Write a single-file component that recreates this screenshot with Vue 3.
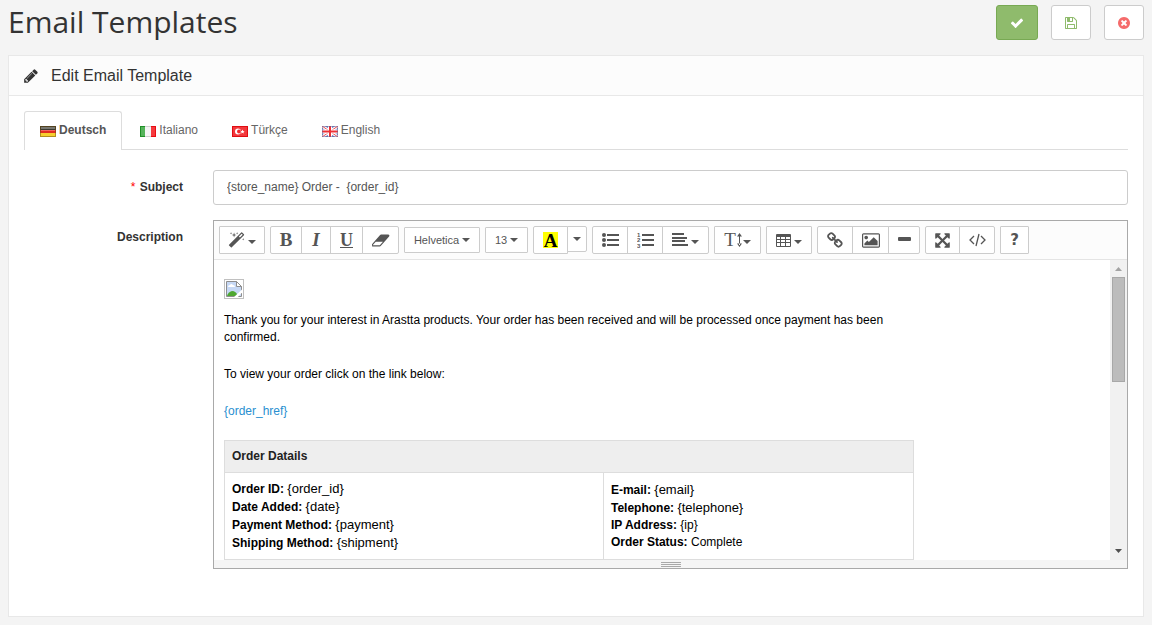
<script setup>
import { ref } from 'vue'

const subject = ref('{store_name} Order -  {order_id}')
const active = ref('de')
const languages = [
  { code: 'de', name: 'Deutsch' },
  { code: 'it', name: 'Italiano' },
  { code: 'tr', name: 'Türkçe' },
  { code: 'en', name: 'English' },
]
</script>

<template>
  <div class="page">
    <header class="page-header">
      <h1>Email Templates</h1>
      <div class="actions">
        <button type="button" class="action primary" aria-label="Save and close">
          <svg width="14" height="14" viewBox="0 0 1792 1792"><path d="M1671 566q0 40-28 68l-724 724-136 136q-28 28-68 28t-68-28l-136-136-362-362q-28-28-28-68t28-68l136-136q28-28 68-28t68 28l294 295 656-657q28-28 68-28t68 28l136 136q28 28 28 68z" /></svg>
        </button>
        <button type="button" class="action save" aria-label="Save">
          <svg width="14" height="14" viewBox="0 0 1792 1792"><path d="M512 1536h768v-384h-768v384zm896 0h128v-896q0-14-10-38.500t-20-34.500l-281-281q-10-10-34-20t-39-10v416q0 40-28 68t-68 28h-576q-40 0-68-28t-28-68v-416h-128v1280h128v-416q0-40 28-68t68-28h832q40 0 68 28t28 68v416zm-384-928v-320q0-13-9.500-22.500t-22.500-9.500h-192q-13 0-22.500 9.500t-9.500 22.500v320q0 13 9.500 22.500t22.500 9.500h192q13 0 22.500-9.500t9.500-22.500zm640 32v928q0 40-28 68t-68 28h-1344q-40 0-68-28t-28-68v-1344q0-40 28-68t68-28h928q40 0 88 20t76 48l280 280q28 28 48 76t20 88z" /></svg>
        </button>
        <button type="button" class="action cancel" aria-label="Cancel">
          <svg width="14" height="14" viewBox="0 0 1792 1792"><path d="M1277 1122q0-26-19-45l-181-181 181-181q19-19 19-45 0-27-19-46l-90-90q-19-19-46-19-26 0-45 19l-181 181-181-181q-19-19-45-19-27 0-46 19l-90 90q-19 19-19 46 0 26 19 45l181 181-181 181q-19 19-19 45 0 27 19 46l90 90q19 19 46 19 26 0 45-19l181-181 181 181q19 19 45 19 27 0 46-19l90-90q19-19 19-46zm387-226q0 209-103 385.500t-279.500 279.500-385.500 103-385.500-103-279.500-279.500-103-385.500 103-385.500 279.500-279.500 385.500-103 385.500 103 279.500 279.500 103 385.500z" /></svg>
        </button>
      </div>
    </header>

    <main class="panel">
      <div class="panel-heading">
        <svg width="16" height="16" viewBox="0 0 1792 1792"><path d="M491 1536l91-91-235-235-91 91v107h128v128h107zm523-928q0-22-22-22-10 0-17 7l-542 542q-7 7-7 17 0 22 22 22 10 0 17-7l542-542q7-7 7-17zm-54-192l416 416-832 832h-416v-416zm683 96q0 53-37 90l-166 166-416-416 166-165q36-38 90-38 53 0 91 38l235 234q37 39 37 91z" /></svg>
        <h2>Edit Email Template</h2>
      </div>

      <div class="panel-body">
        <nav class="tabs">
          <a
            v-for="lang in languages"
            :key="lang.code"
            href="#"
            class="tab"
            :class="{ active: active === lang.code }"
            @click.prevent="active = lang.code"
          >
            <svg class="flag" width="16" height="11" viewBox="0 0 16 11">
              <g v-if="lang.code === 'de'">
                <rect width="16" height="4" fill="#3a3a33" />
                <rect y="4" width="16" height="3" fill="#e02b20" />
                <rect y="7" width="16" height="4" fill="#f6cf2e" />
                <rect x="1" y="1" width="14" height="2" fill="#77776f" />
                <rect x="1" y="4" width="14" height="1" fill="#f5625a" />
                <rect x="0.500" y="0.500" width="15" height="10" fill="none" stroke="#6b4c10" stroke-opacity=".5" />
              </g>
              <g v-else-if="lang.code === 'it'">
                <rect width="16" height="11" fill="#f4f4f4" />
                <rect width="5" height="11" fill="#1f8f26" />
                <rect x="11" width="5" height="11" fill="#e80c12" />
                <rect x="1" y="1" width="4" height="9" fill="#55b35a" />
                <rect x="11" y="1" width="4" height="9" fill="#f53a3e" />
                <path d="M5 .5h6M5 10.500h6" stroke="#cfcfcf" />
              </g>
              <g v-else-if="lang.code === 'tr'">
                <rect width="16" height="11" fill="#e00d12" />
                <rect x="1" y="1" width="14" height="9" fill="#f3383c" />
                <circle cx="6" cy="5.500" r="3" fill="#fff" />
                <circle cx="7" cy="5.500" r="2" fill="#f0282c" />
                <path d="M10.500 3.500l.6 1.400 1.500.1-1.100 1 .3 1.500-1.300-.8-1.300.8.3-1.500-1.100-1 1.500-.1z" fill="#fff" />
              </g>
              <g v-else>
                <rect width="16" height="11" fill="#7d8ac4" />
                <path d="M0 0l16 11M16 0L0 11" stroke="#fff" stroke-width="3" />
                <path d="M0 0l16 11M16 0L0 11" stroke="#ee4b50" stroke-width="1" />
                <path d="M8 0v11M0 5.500h16" stroke="#fff" stroke-width="4" />
                <path d="M8 0v11M0 5.500h16" stroke="#ee3136" stroke-width="2" />
                <rect x="0.500" y="0.500" width="15" height="10" fill="none" stroke="#5b5f96" stroke-opacity=".5" />
              </g>
            </svg>
            <span>{{ lang.name }}</span>
          </a>
        </nav>

        <form class="form" @submit.prevent>
          <div class="row">
            <label for="subject"><span class="required">*</span> Subject</label>
            <div class="field">
              <input id="subject" v-model="subject" type="text" class="text-input" />
            </div>
          </div>

          <div class="row">
            <label id="description-label">Description</label>
            <div class="field">
              <div class="editor">
                <div class="toolbar">
                  <div class="group">
                    <button type="button" class="tool w46" aria-label="Style">
                      <svg width="17" height="17" viewBox="0 0 1792 1792"><path d="M1254 581l293-293-107-107-293 293zm447-293q0 27-18 45l-1286 1286q-18 18-45 18t-45-18l-198-198q-18-18-18-45t18-45l1286-1286q18-18 45-18t45 18l198 198q18 18 18 45zm-1351-190l98 30-98 30-30 98-30-98-98-30 98-30 30-98zm350 162l196 60-196 60-60 196-60-196-196-60 196-60 60-196zm930 478l98 30-98 30-30 98-30-98-98-30 98-30 30-98zm-640-640l98 30-98 30-30 98-30-98-98-30 98-30 30-98z" /></svg>
                      <i class="caret"></i>
                    </button>
                  </div>
                  <div class="group">
                    <button type="button" class="tool w32 serif bold">B</button>
                    <button type="button" class="tool w30 serif bold italic">I</button>
                    <button type="button" class="tool w33 serif bold underline">U</button>
                    <button type="button" class="tool w37" aria-label="Remove formatting">
                      <svg width="18" height="17" viewBox="0 0 1920 1792"><path d="M832 1408l336-384h-768l-336 384h768zm1013-1077q15 34 9.500 71.500t-30.500 65.500l-896 1024q-38 44-96 44h-768q-38 0-69.500-20.500t-47.500-54.500q-15-34-9.500-71.500t30.500-65.500l896-1024q38-44 96-44h768q38 0 69.500 20.500t47.500 54.500z" /></svg>
                    </button>
                  </div>
                  <div class="group">
                    <button type="button" class="tool short w76">Helvetica <i class="caret"></i></button>
                  </div>
                  <div class="group">
                    <button type="button" class="tool short w43">13 <i class="caret"></i></button>
                  </div>
                  <div class="group">
                    <button type="button" class="tool w35 serif bold"><span class="mark">A</span></button>
                    <button type="button" class="tool short w20" aria-label="More colors"><i class="caret"></i></button>
                  </div>
                  <div class="group">
                    <button type="button" class="tool w36" aria-label="Unordered list">
                      <svg width="17" height="14" viewBox="0 0 17 14">
                        <circle cx="2" cy="2" r="2" /><circle cx="2" cy="7" r="2" /><circle cx="2" cy="12" r="2" />
                        <path d="M5 1h12v2H5zM5 6h12v2H5zM5 11h12v2H5z" />
                      </svg>
                    </button>
                    <button type="button" class="tool w36" aria-label="Ordered list">
                      <svg width="17" height="16" viewBox="0 0 17 16">
                        <text class="digit" x="0" y="5">1</text>
                        <text class="digit" x="0" y="10">2</text>
                        <text class="digit" x="0" y="16">3</text>
                        <path d="M5 2h12v2H5zM5 7h12v2H5zM5 12h12v2H5z" />
                      </svg>
                    </button>
                    <button type="button" class="tool w47" aria-label="Paragraph">
                      <svg width="16" height="14" viewBox="0 0 16 14"><path d="M0 0h12v2H0zM0 4h15v2H0zM0 7h13v2H0zM0 11h16v2H0z" /></svg>
                      <i class="caret"></i>
                    </button>
                  </div>
                  <div class="group">
                    <button type="button" class="tool w47 serif tight" aria-label="Line height">
                      <span>T</span>
                      <svg width="5" height="14" viewBox="0 0 5 14"><path d="M2 2h1v10H2zM0 3.500L2.500 0 5 3.500zM0 10.500L2.500 14 5 10.500z" /></svg>
                      <i class="caret"></i>
                    </button>
                  </div>
                  <div class="group">
                    <button type="button" class="tool w46" aria-label="Table">
                      <svg width="15" height="13" viewBox="0 0 15 13"><path fill-rule="evenodd" d="M1 0h13q1 0 1 1v11q0 1-1 1H1q-1 0-1-1V1q0-1 1-1zM1 3v2h3V3zM5 3v2h4V3zM10 3v2h4V3zM1 6v2h3V6zM5 6v2h4V6zM10 6v2h4V6zM1 9v3h3V9zM5 9v3h4V9zM10 9v3h4V9z" /></svg>
                      <i class="caret"></i>
                    </button>
                  </div>
                  <div class="group">
                    <button type="button" class="tool w36" aria-label="Link">
                      <svg width="17" height="17" viewBox="0 0 1792 1792"><path d="M1456 1216q0-40-28-68l-208-208q-28-28-68-28-42 0-72 32 3 3 19 18.500t21.500 21.500 15 19 13 25.500 3.500 27.500q0 40-28 68t-68 28q-15 0-27.500-3.500t-25.500-13-19-15-21.500-21.500-18.500-19q-33 31-33 73 0 40 28 68l206 207q27 27 68 27 40 0 68-26l147-146q28-28 28-67zm-703-705q0-40-28-68l-206-207q-28-28-68-28-39 0-68 27l-147 146q-28 28-28 67 0 40 28 68l208 208q27 27 68 27 42 0 72-31-3-3-19-18.500t-21.500-21.500-15-19-13-25.500-3.500-27.500q0-40 28-68t68-28q15 0 27.500 3.500t25.500 13 19 15 21.500 21.500 18.500 19q33-31 33-73zm895 705q0 120-85 203l-147 146q-83 83-203 83-121 0-204-85l-206-207q-83-83-83-203 0-123 88-209l-88-88q-86 88-208 88-120 0-204-84l-208-208q-84-84-84-204t85-203l147-146q83-83 203-83 121 0 204 85l206 207q83 83 83 203 0 123-88 209l88 88q86-88 208-88 120 0 204 84l208 208q84 84 84 204z" /></svg>
                    </button>
                    <button type="button" class="tool w37" aria-label="Picture">
                      <svg width="18" height="17" viewBox="-64 0 1920 1792"><path d="M576 576q0 80-56 136t-136 56-136-56-56-136 56-136 136-56 136 56 56 136zm1024 384v448h-1408v-192l320-320 160 160 512-512zm96-704h-1600q-13 0-22.500 9.500t-9.500 22.500v1216q0 13 9.500 22.500t22.500 9.500h1600q13 0 22.500-9.500t9.500-22.500v-1216q0-13-9.500-22.500t-22.500-9.500zm160 32v1216q0 66-47 113t-113 47h-1600q-66 0-113-47t-47-113v-1216q0-66 47-113t113-47h1600q66 0 113 47t47 113z" /></svg>
                    </button>
                    <button type="button" class="tool w32" aria-label="Horizontal rule">
                      <svg width="13" height="14" viewBox="0 0 13 14"><rect y="4" width="13" height="4" rx="1" /></svg>
                    </button>
                  </div>
                  <div class="group">
                    <button type="button" class="tool w35" aria-label="Full screen">
                      <svg width="17" height="17" viewBox="0 0 1792 1792"><path d="M1411 541l-355 355 355 355 144-144q29-31 70-14 39 17 39 59v448q0 26-19 45t-45 19h-448q-42 0-59-40-17-39 14-69l144-144-355-355-355 355 144 144q31 30 14 69-17 40-59 40h-448q-26 0-45-19t-19-45v-448q0-42 40-59 39-17 69 14l144 144 355-355-355-355-144 144q-19 19-45 19-12 0-24-5-40-17-40-59v-448q0-26 19-45t45-19h448q42 0 59 40 17 39-14 69l-144 144 355 355 355-355-144-144q-31-30-14-69 17-40 59-40h448q26 0 45 19t19 45v448q0 42-39 59-13 5-25 5-26 0-45-19z" /></svg>
                    </button>
                    <button type="button" class="tool w36" aria-label="Code view">
                      <svg width="17" height="14" viewBox="0 0 17 14"><path d="M5 3L1 7l4 4M12 3l4 4-4 4M10 1L7 13" fill="none" stroke="#555" stroke-width="1.300" /></svg>
                    </button>
                  </div>
                  <div class="group">
                    <button type="button" class="tool w29 help" aria-label="Help">?</button>
                  </div>
                </div>

                <div class="viewport">
                  <div class="content" role="textbox" aria-labelledby="description-label">
                    <svg class="missing" width="20" height="20" viewBox="0 0 20 20">
                      <rect x="0.500" y="0.500" width="19" height="19" fill="#fff" stroke="#c0c0c0" />
                      <path d="M2.500 2.500h10l5 5v10h-15z" fill="#c6d8f5" stroke="#8e8e8e" />
                      <path d="M4 8q0-2 2-2 1-2 3 0 2 0 2 2z" fill="#fff" />
                      <path d="M3 17q1-4 5-5 4 0 6 5z" fill="#4fa832" />
                      <path d="M12.500 2.500v5h5z" fill="#fff" stroke="#8e8e8e" />
                      <path d="M9 19l9-8.500v3L13 19z" fill="#fff" />
                    </svg>
                    <p>Thank you for your interest in Arastta products. Your order has been received and will be processed once payment has been confirmed.</p>
                    <p>To view your order click on the link below:</p>
                    <p><a href="#">{order_href}</a></p>
                    <table>
                      <thead>
                        <tr><th colspan="2">Order Datails</th></tr>
                      </thead>
                      <tbody>
                        <tr>
                          <td class="order">
                            <b>Order ID:</b> <span class="value">{order_id}</span><br />
                            <b>Date Added:</b> <span class="value">{date}</span><br />
                            <b>Payment Method:</b> <span class="value">{payment}</span><br />
                            <b>Shipping Method:</b> <span class="value">{shipment}</span>
                          </td>
                          <td class="customer">
                            <b>E-mail:</b> <span class="value">{email}</span><br />
                            <b>Telephone:</b> <span class="value">{telephone}</span><br />
                            <b>IP Address:</b> {ip}<br />
                            <b>Order Status:</b> Complete
                          </td>
                        </tr>
                      </tbody>
                    </table>
                  </div>
                  <div class="scrollbar">
                    <svg width="7" height="4" viewBox="0 0 7 4"><path d="M0 4l3.500-4L7 4z" fill="#a3a3a3" /></svg>
                    <div class="thumb"></div>
                    <svg class="down" width="7" height="4" viewBox="0 0 7 4"><path d="M0 0l3.500 4L7 0z" fill="#505050" /></svg>
                  </div>
                </div>

                <div class="resizer"><i></i><i></i><i></i></div>
              </div>
            </div>
          </div>
        </form>
      </div>
    </main>
  </div>
</template>

<style>
body {
  background: #f4f4f4;
}
</style>

<style scoped>
.page {
  padding: 0 8px 8px;
  font: 12px/17px "Liberation Sans", Arial, sans-serif;
  color: #555;
}
.page * {
  box-sizing: border-box;
}
.page-header {
  display: flex;
  justify-content: space-between;
  align-items: flex-start;
  height: 55px;
}
h1 {
  margin: 0;
  font: 400 30px/44px "Open Sans", sans-serif;
  color: #333;
}
.actions {
  display: flex;
  gap: 13px;
  padding-top: 5px;
}
.action {
  display: flex;
  align-items: center;
  justify-content: center;
  width: 40px;
  height: 35px;
  padding: 0;
  border: 1px solid #ccc;
  border-radius: 3px;
  background: #fff;
}
.primary {
  width: 42px;
  background: #8fbb6c;
  border-color: #78a953;
  fill: #fff;
}
.save {
  fill: #8fbb6c;
}
.cancel {
  fill: #f56b6b;
}
.panel {
  border: 1px solid #e8e8e8;
  background: #fff;
}
.panel-heading {
  display: flex;
  align-items: center;
  gap: 12px;
  height: 40px;
  padding: 0 14px;
  border-bottom: 1px solid #e8e8e8;
  background: #fcfcfc;
  fill: #333;
}
h2 {
  margin: 0;
  font-size: 16px;
  line-height: 20px;
  font-weight: 400;
  color: #333;
}
.panel-body {
  padding: 15px 15px 47px;
}
.tabs {
  display: flex;
  gap: 2px;
  border-bottom: 1px solid #ddd;
}
.tab {
  display: flex;
  align-items: center;
  gap: 3px;
  height: 39px;
  margin-bottom: -1px;
  padding: 0 15px 2px;
  border: 1px solid transparent;
  border-bottom: 0;
  border-radius: 3px 3px 0 0;
  color: #666;
  text-decoration: none;
}
.tab.active {
  border-color: #ddd;
  background: #fff;
  color: #555;
  font-weight: 700;
}
.flag {
  margin-top: 2px;
}
.form {
  display: flex;
  flex-direction: column;
  gap: 15px;
  padding-top: 20px;
}
.row {
  display: grid;
  grid-template-columns: minmax(0, 1fr) minmax(0, 5fr);
  margin: 0 -15px;
}
.row label {
  padding: 9px 15px 0;
  text-align: right;
  font-weight: 700;
  color: #333;
}
.required {
  margin-right: 1px;
  color: #f00;
  font-weight: 400;
}
.field {
  padding: 0 15px;
}
.text-input {
  display: block;
  width: 100%;
  height: 35px;
  padding: 0 13px 2px;
  border: 1px solid #ccc;
  border-radius: 3px;
  background: #fff;
  font: inherit;
  color: #555;
}
.editor {
  border: 1px solid #a9a9a9;
}
.toolbar {
  display: flex;
  flex-wrap: wrap;
  align-items: center;
  gap: 5px;
  padding: 5px;
  border-bottom: 1px solid #e4e4e4;
  background: #fcfcfc;
}
.group {
  display: flex;
}
.tool {
  display: flex;
  align-items: center;
  justify-content: center;
  gap: 3px;
  height: 28px;
  padding: 0;
  border: 1px solid #ccc;
  background: #fff;
  fill: #555;
  color: #555;
  font: 11px/16px "Liberation Sans", Arial, sans-serif;
}
.tool + .tool {
  margin-left: -1px;
}
.tool:first-child {
  border-radius: 2px 0 0 2px;
}
.tool:last-child {
  border-radius: 0 2px 2px 0;
}
.tool:only-child {
  border-radius: 1px;
}
.short {
  height: 26px;
}
.w20 { width: 20px; }
.w29 { width: 29px; }
.w30 { width: 30px; }
.w32 { width: 32px; }
.w33 { width: 33px; }
.w35 { width: 35px; }
.w36 { width: 36px; }
.w37 { width: 37px; }
.w43 { width: 43px; }
.w46 { width: 46px; }
.w47 { width: 47px; }
.w76 { width: 76px; }
.serif {
  font: 19px/18px "Liberation Serif", serif;
}
.bold {
  font-weight: 700;
}
.italic {
  font-style: italic;
}
.underline {
  font-size: 18px;
  text-decoration: underline;
}
.tight {
  gap: 1px;
}
.mark {
  width: 15px;
  height: 16px;
  line-height: 17px;
  background: #ff0;
  color: #000;
}
.help {
  font: 700 15px/16px "DejaVu Sans", sans-serif;
}
.digit {
  font: 700 6px "Liberation Sans", Arial, sans-serif;
}
.caret {
  border: 4px solid transparent;
  border-top-color: #555;
  border-bottom: 0;
}
svg + .caret {
  margin-top: 4px;
}
.viewport {
  display: flex;
  height: 300px;
  overflow: hidden;
}
.content {
  flex: 1;
  padding: 19px 10px 0;
  color: #000;
}
.missing {
  display: block;
  margin-bottom: 13px;
}
.content p {
  max-width: 680px;
  margin: 0 0 20px;
}
.content a {
  color: #2a8fd0;
  text-decoration: none;
}
table {
  width: 690px;
  max-width: 100%;
  border-collapse: collapse;
}
th,
td {
  padding: 7px;
  border: 1px solid #ddd;
  text-align: left;
}
th {
  height: 32px;
  background: #eee;
  color: #222;
}
td {
  height: 87px;
}
.order {
  width: 55%;
  line-height: 18px;
}
.customer {
  line-height: 17px;
}
.value {
  font-size: 13px;
}
.scrollbar {
  display: flex;
  flex-direction: column;
  align-items: center;
  width: 17px;
  padding: 7px 0;
  background: #f1f1f1;
}
.thumb {
  width: 13px;
  height: 105px;
  margin-top: 6px;
  border: 1px solid #a8a8a8;
  background: #bcbcbc;
}
.down {
  margin-top: auto;
}
.resizer {
  display: flex;
  flex-direction: column;
  align-items: center;
  gap: 1px;
  height: 8px;
  padding-top: 2px;
  background: #f5f5f5;
}
.resizer i {
  width: 20px;
  height: 1px;
  background: #a9a9a9;
}
</style>
